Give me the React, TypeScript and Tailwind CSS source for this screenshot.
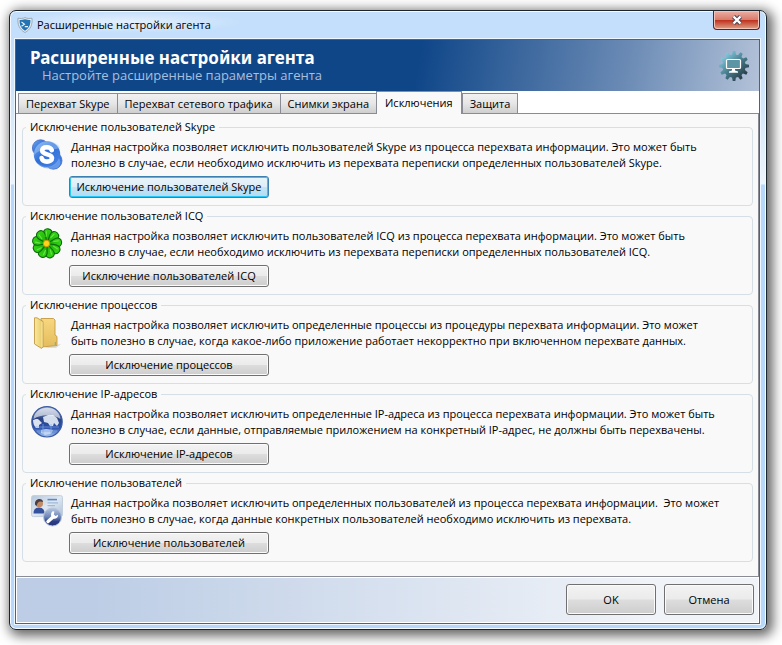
import React, { useState } from 'react';
import { clsx } from 'clsx';

interface Exclusion {
  id: string;
  title: string;
  lines: string[];
  icon: React.ReactNode;
}

const SkypeIcon = () => (
  <svg viewBox="0 0 32 32" className="h-8 w-8 shrink-0" aria-hidden="true">
    <defs>
      <linearGradient id="skype" x1="0" y1="0" x2="1" y2="1">
        <stop offset="0" stopColor="#78aef0" />
        <stop offset="0.45" stopColor="#2f6fd8" />
        <stop offset="1" stopColor="#4a86e6" />
      </linearGradient>
    </defs>
    <g fill="url(#skype)" stroke="#4668c4" strokeWidth="0.8">
      <circle cx="9.6" cy="9" r="8.2" />
      <circle cx="22.4" cy="21.6" r="8.6" />
    </g>
    <circle cx="16" cy="15.4" r="13.2" fill="url(#skype)" />
    <path d="M3 17C7 9 18 12 29 9C28 5 22 2 14 2.4C7 3.4 3 9 3 17Z" fill="#a8ccf8" opacity="0.45" />
    <path d="M7 24C13 30 24 29 28 19C30 22 30 27 26 29C20 31 11 30 7 24Z" fill="#8fb8f2" opacity="0.5" />
    <path
      d="M20.8 11.2C20 9 18.2 8.2 15.8 8.2C13 8.2 11.2 9.4 11.2 11.6C11.2 16.4 21 14.4 21 19C21 21.4 18.8 22.6 16 22.6C13.2 22.6 11.2 21.4 10.6 19"
      fill="none"
      stroke="#fff"
      strokeWidth="4.6"
      strokeLinecap="round"
    />
  </svg>
);

const petals = [0, 40, 80, 120, 160, 200, 240, 280, 320];

const FlowerIcon = () => (
  <svg viewBox="0 0 32 32" className="h-8 w-8 shrink-0" aria-hidden="true">
    <defs>
      <linearGradient id="petal" x1="0" y1="0" x2="0" y2="1">
        <stop offset="0" stopColor="#35d414" />
        <stop offset="1" stopColor="#18a808" />
      </linearGradient>
    </defs>
    <circle cx="16" cy="15.5" r="11" fill="#0d7a0a" />
    {petals.map(a => (
      <path
        key={a}
        d="M16 15.5L12.2 7.4C10.6 3.4 12.8 0.8 16 0.8C19.2 0.8 21.4 3.4 19.8 7.4Z"
        fill="url(#petal)"
        stroke="#0b6b08"
        strokeWidth="1.1"
        transform={`rotate(${a + 4} 16 15.5)`}
      />
    ))}
    {petals.map(a => (
      <path
        key={a}
        d="M14.6 8.5V4"
        stroke="#7cf455"
        strokeWidth="1.2"
        strokeLinecap="round"
        opacity="0.7"
        transform={`rotate(${a + 4} 16 15.5)`}
      />
    ))}
    <circle cx="15.5" cy="15.5" r="3.2" fill="#ffd51a" stroke="#e88c00" strokeWidth="1" />
  </svg>
);

const FolderIcon = () => (
  <svg viewBox="0 0 32 32" className="h-8 w-8 shrink-0" aria-hidden="true">
    <defs>
      <linearGradient id="folderFront" x1="0" y1="0" x2="1" y2="0">
        <stop offset="0" stopColor="#fae99c" />
        <stop offset="1" stopColor="#e8c766" />
      </linearGradient>
      <linearGradient id="folderBack" x1="0" y1="0" x2="0" y2="1">
        <stop offset="0" stopColor="#f8d780" />
        <stop offset="1" stopColor="#e4bc5c" />
      </linearGradient>
    </defs>
    <path d="M20 29L30 27L25 31H14Z" fill="#c8c8c8" opacity="0.6" />
    <path d="M10 1.5H22.5L24 3V18L26 19.5V28.5L11 30Z" fill="url(#folderBack)" stroke="#c39a42" strokeWidth="0.9" />
    <path d="M3.5 0.8H6L12 4.4V30L10.5 31.4L3.5 27Z" fill="url(#folderFront)" stroke="#c39a42" strokeWidth="0.9" />
    <path d="M11 5V30" stroke="#fbf0bd" strokeWidth="0.8" />
    <path d="M24.4 25V28" stroke="#6dc08a" strokeWidth="1.2" />
  </svg>
);

const GlobeIcon = () => (
  <svg viewBox="0 0 32 32" className="h-8 w-8 shrink-0" aria-hidden="true">
    <defs>
      <linearGradient id="globe" x1="0" y1="0" x2="0" y2="1">
        <stop offset="0" stopColor="#a3b4d2" />
        <stop offset="0.4" stopColor="#2b4383" />
        <stop offset="0.7" stopColor="#2c50ad" />
        <stop offset="1" stopColor="#a8cbf6" />
      </linearGradient>
    </defs>
    <circle cx="16" cy="15.8" r="15.2" fill="url(#globe)" stroke="#3c5ca3" strokeWidth="1.2" />
    <path d="M2 14C5 13 7 12 9 15L11 17L8 19L8 22L5 22C3 20 2 17 2 14Z" fill="#eef2f8" opacity="0.9" />
    <path d="M12 11L17 9L22 9L26 12L28 17L26 20L23 17L22 20L19 20L17 17L13 16Z" fill="#e3eaf5" opacity="0.92" />
    <path d="M10 24L15 23L22 24L20 28L14 29L10 27Z" fill="#d5e4fa" opacity="0.8" />
    <path d="M4 21H28M6 25H26M12 18V30M20 18V30" stroke="#7fa6e4" strokeWidth="0.7" fill="none" />
    <path d="M2.5 13C4 -2 28 -2 29.5 13C22 8 10 8 2.5 13Z" fill="#fff" opacity="0.6" />
  </svg>
);

const UserCardIcon = () => (
  <svg viewBox="0 0 32 32" className="h-8 w-8 shrink-0" aria-hidden="true">
    <defs>
      <linearGradient id="card" x1="0" y1="0" x2="1" y2="1">
        <stop offset="0" stopColor="#b4c6dc" />
        <stop offset="0.5" stopColor="#dfe8f2" />
        <stop offset="1" stopColor="#a9bfd8" />
      </linearGradient>
      <linearGradient id="badge" x1="0" y1="0" x2="0" y2="1">
        <stop offset="0" stopColor="#b9c8e0" />
        <stop offset="0.5" stopColor="#6c84b8" />
        <stop offset="0.75" stopColor="#2c3d86" />
        <stop offset="1" stopColor="#26347a" />
      </linearGradient>
    </defs>
    <rect x="0.5" y="0.6" width="31" height="21" rx="2" fill="url(#card)" stroke="#c3cfdd" />
    <path d="M16.5 4.6H26" stroke="#5f88bf" strokeWidth="1.6" />
    <path d="M16.5 7.8H27M16.5 10.6H24" stroke="#9fb9d8" strokeWidth="1.2" />
    <path d="M2.5 18.6C2.5 14 5 12.4 8 12.4C11 12.4 13.5 14 13.5 18.6Z" fill="#35509c" />
    <circle cx="8.2" cy="8.6" r="3.8" fill="#c08a64" />
    <path d="M4 9.5C3.4 3 12 2.6 12 7C9 5.8 6.6 6 5.6 11Z" fill="#4a3e42" />
    <circle cx="21.5" cy="22" r="9" fill="url(#badge)" stroke="#b6c6de" />
    <path d="M17 26.5L22 22" stroke="#fff" strokeWidth="3.4" strokeLinecap="round" />
    <path d="M21.6 16.3C19.4 18 19.4 22 22.4 23.4C25 24.4 27.4 22.6 27 19.8L24.6 21L22.8 19.4L23.4 16.6Z" fill="#fff" />
  </svg>
);

const ShieldIcon = () => (
  <svg viewBox="0 0 16 16" className="h-4 w-4" aria-hidden="true">
    <path
      d="M8 0.6C10 1.6 12.5 1.6 15 1.2C15.6 7.5 13.6 12.6 8 15.5C2.4 12.6 0.4 7.5 1 1.2C3.5 1.6 6 1.6 8 0.6Z"
      fill="#e6ebf0"
      stroke="#8d9aa8"
      strokeWidth="0.8"
    />
    <path d="M8 2.3C10 3 11.8 3.1 13.4 3C13.6 7.8 12 11.4 8 13.7C4 11.4 2.4 7.8 2.6 3C4.2 3.1 6 3 8 2.3Z" fill="#2474b4" />
    <path d="M4.5 5L7.5 7.3L4.5 9.2M7.8 9.6H11" stroke="#e8f5ff" strokeWidth="1.1" fill="none" />
  </svg>
);

const GearIcon = () => (
  <svg viewBox="0 0 32 32" className="h-8 w-8" aria-hidden="true">
    <defs>
      <linearGradient id="gear" x1="0.1" y1="0.1" x2="0.85" y2="0.9">
        <stop offset="0" stopColor="#8edcf0" />
        <stop offset="0.5" stopColor="#4a7f90" />
        <stop offset="1" stopColor="#22343c" />
      </linearGradient>
      <mask id="gearShape">
        <circle cx="16" cy="16" r="11.6" fill="#fff" />
        {[0, 30, 60, 90, 120, 150, 180, 210, 240, 270, 300, 330].map(a => (
          <path key={a} d="M13.8 6L14.7 1H17.3L18.2 6Z" fill="#fff" transform={`rotate(${a} 16 16)`} />
        ))}
      </mask>
    </defs>
    <rect width="32" height="32" fill="url(#gear)" mask="url(#gearShape)" />
    <rect x="8.5" y="9.5" width="14" height="9" rx="1" fill="#5e95a5" stroke="#fff" strokeWidth="1.2" />
    <path d="M14 19H17V20.6L20 21.4V22.8H11V21.4L14 20.6Z" fill="#fff" />
  </svg>
);

const tabs = ['Перехват Skype', 'Перехват сетевого трафика', 'Снимки экрана', 'Исключения', 'Защита'];

const exclusions: Exclusion[] = [
  {
    id: 'skype',
    title: 'Исключение пользователей Skype',
    lines: [
      'Данная настройка позволяет исключить пользователей Skype из процесса перехвата информации. Это может быть',
      'полезно в случае, если необходимо исключить из перехвата переписки определенных пользователей Skype.',
    ],
    icon: <SkypeIcon />,
  },
  {
    id: 'icq',
    title: 'Исключение пользователей ICQ',
    lines: [
      'Данная настройка позволяет исключить пользователей ICQ из процесса перехвата информации. Это может быть',
      'полезно в случае, если необходимо исключить из перехвата переписки определенных пользователей ICQ.',
    ],
    icon: <FlowerIcon />,
  },
  {
    id: 'processes',
    title: 'Исключение процессов',
    lines: [
      'Данная настройка позволяет исключить определенные процессы из процедуры перехвата информации. Это может',
      'быть полезно в случае, когда какое-либо приложение работает некорректно при включенном перехвате данных.',
    ],
    icon: <FolderIcon />,
  },
  {
    id: 'ip',
    title: 'Исключение IP-адресов',
    lines: [
      'Данная настройка позволяет исключить определенные IP-адреса из процесса перехвата информации. Это может быть',
      'полезно в случае, если данные, отправляемые приложением на конкретный IP-адрес, не должны быть перехвачены.',
    ],
    icon: <GlobeIcon />,
  },
  {
    id: 'users',
    title: 'Исключение пользователей',
    lines: [
      'Данная настройка позволяет исключить определенных пользователей из процесса перехвата информации.  Это может',
      'быть полезно в случае, когда данные конкретных пользователей необходимо исключить из перехвата.',
    ],
    icon: <UserCardIcon />,
  },
];

const buttonStyle =
  'rounded-[3px] border border-[#707070] bg-[linear-gradient(#f3f3f3_0%,#ebebeb_49%,#dddddd_51%,#cdcdcd_100%)] shadow-[inset_0_0_0_1px_#fbfbfb]';

const ExclusionGroup: React.FC<{ item: Exclusion; focused: boolean; onFocus: () => void }> = ({
  item,
  focused,
  onFocus,
}) => (
  <fieldset className="min-w-0 rounded-[4px] border border-[#d5dfe5] px-2 pb-[7px]">
    <legend className="-ml-[5px] px-1 leading-4">{item.title}</legend>
    <div className="flex gap-[6px] pt-1">
      {item.icon}
      <div className="min-w-0">
        <p className="whitespace-pre pl-[2px] leading-4">{item.lines.join('\n')}</p>
        <button
          type="button"
          onClick={onFocus}
          className={clsx(
            'mt-[5px] h-[22px] w-[200px] whitespace-nowrap leading-4',
            focused
              ? 'rounded-[3px] border border-[#3c7fb1] bg-[linear-gradient(#eaf4fa_0%,#dcedf7_49%,#c4e4f5_51%,#b0dcf4_100%)] shadow-[inset_0_0_0_1px_#27c7f7]'
              : buttonStyle
          )}
        >
          {item.title}
        </button>
      </div>
    </div>
  </fieldset>
);

export default function App() {
  const [activeTab, setActiveTab] = useState('Исключения');
  const [focusedId, setFocusedId] = useState('skype');

  return (
    <div className="bg-white pt-[10px] pr-[15px] pb-[15px] pl-[9px] font-['Open_Sans','Noto_Sans',sans-serif] text-[11px] leading-4 text-black">
      <div className="rounded-[7px] border border-[#1c242c] bg-[linear-gradient(#c4dffb_0,#c4dffb_28px,#d4e7fa_100px,#eef5fc_173px,#b7d8fa_174px)] pr-[6px] pb-[5px] pl-[5px] shadow-[inset_0_0_0_1px_#f4faff,3px_3px_12px_3px_rgba(0,0,0,0.6)]">
        {/* Title bar */}
        <div className="flex h-7 items-start justify-between">
          <div className="flex items-center gap-1 rounded-full bg-[radial-gradient(closest-side,rgba(255,255,255,0.55),transparent)] pt-[6px] pr-8 pl-[2px]">
            <ShieldIcon />
            <span>Расширенные настройки агента</span>
          </div>
          <button
            type="button"
            aria-label="Закрыть"
            className="flex h-[19px] w-[47px] items-center justify-center rounded-b-[4px] border border-t-0 border-[#5c2320] bg-[linear-gradient(#eab0a4_0%,#d97b6b_48%,#bf3320_52%,#dfa284_100%)] shadow-[inset_0_0_0_1px_#f3c3b8]"
          >
            <svg viewBox="0 0 12 10" className="h-[10px] w-3" aria-hidden="true">
              <path d="M2.5 1.5L9.5 8.5M9.5 1.5L2.5 8.5" stroke="#4c4a5c" strokeWidth="4.4" />
              <path d="M2.5 1.5L9.5 8.5M9.5 1.5L2.5 8.5" stroke="#fff" strokeWidth="2.4" />
            </svg>
          </button>
        </div>

        <div className="border border-[#4d6377] bg-white shadow-[0_0_0_1px_#eef7ff]">
          {/* Header */}
          <header className="flex h-[51px] items-center justify-between bg-[linear-gradient(100deg,#0f4688_54%,#6b8bb5_82%,#b3c2d8_100%)] pr-[9px] pl-[14px] whitespace-nowrap">
            <div>
              <h1 className="font-['Noto_Sans',sans-serif] text-[17px] leading-[18px] font-bold text-white">
                Расширенные настройки агента
              </h1>
              <p className="pl-3 text-[13px] leading-4 text-[#a9bfdc]">Настройте расширенные параметры агента</p>
            </div>
            <GearIcon />
          </header>

          {/* Tabs */}
          <div role="tablist" className="flex items-end pl-[2px] whitespace-nowrap">
            {tabs.map(tab => (
              <button
                key={tab}
                type="button"
                role="tab"
                aria-selected={tab === activeTab}
                onClick={() => setActiveTab(tab)}
                className={clsx(
                  'border border-b-0 border-[#898c95]',
                  tab === activeTab
                    ? 'relative -mb-px h-[23px] bg-[#f9f9f9] px-2'
                    : '-mr-px h-5 bg-linear-to-b from-[#f2f2f2] via-[#e6e6e6] to-[#cfcfcf] px-[7px]'
                )}
              >
                {tab}
              </button>
            ))}
          </div>

          {/* Exclusion groups */}
          <main className="flex flex-col gap-[2px] border border-l-0 border-[#898c95] bg-[#f9f9f9] pt-[5px] pr-[5px] pb-[14px] pl-[6px]">
            {exclusions.map(item => (
              <ExclusionGroup
                key={item.id}
                item={item}
                focused={item.id === focusedId}
                onFocus={() => setFocusedId(item.id)}
              />
            ))}
          </main>

          {/* Footer */}
          <footer className="m-px flex justify-end gap-2 bg-linear-to-r from-[#bccde5] from-10% to-[#f0f3f8] to-85% px-1 pt-[6px] pb-[7px]">
            <button type="button" className={clsx(buttonStyle, 'h-[31px] w-[90px]')}>
              OK
            </button>
            <button type="button" className={clsx(buttonStyle, 'h-[31px] w-[90px]')}>
              Отмена
            </button>
          </footer>
        </div>
      </div>
    </div>
  );
}
